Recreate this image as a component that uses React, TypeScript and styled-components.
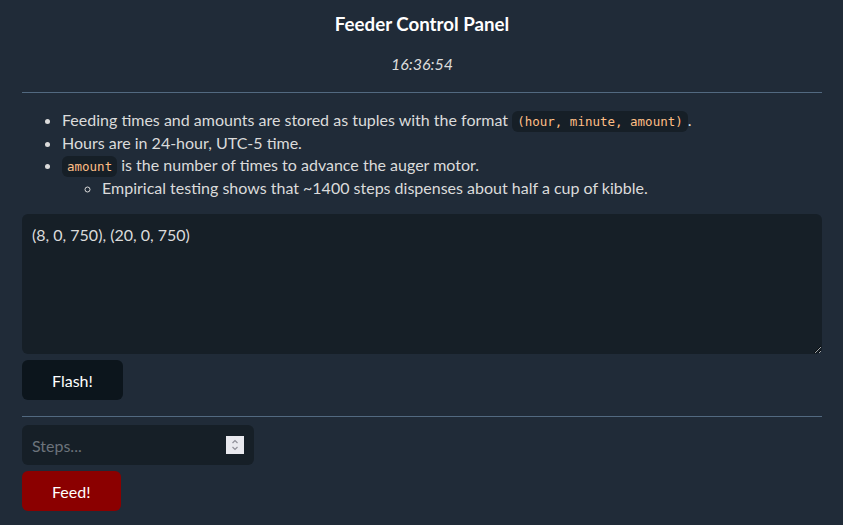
import React from "react";
import styled, { createGlobalStyle } from "styled-components";

const Global = createGlobalStyle`
  html { background: #202b38; }
  body {
    margin: 0;
    background: #202b38;
    color: #dbdbdb;
    font-family: "Lato", "Noto Sans", sans-serif;
    font-size: 16px;
    line-height: 1.4;
  }
`;

const Page = styled.main`
  max-width: 800px;
  margin: 0 auto;
  padding: 11px 21px 14px 22px;
  display: flex;
  flex-direction: column;
  align-items: stretch;
`;

const Title = styled.h3`
  margin: 0;
  text-align: center;
  color: #ffffff;
  font-size: 18.72px;
  font-weight: 700;
  line-height: 26px;
`;

const Clock = styled.p`
  margin: 16px 0 0;
  text-align: center;
  font-style: italic;
  line-height: 22.4px;
`;

const Rule = styled.hr<{ $top: number; $bottom: number }>`
  width: 100%;
  border: none;
  border-top: 1px solid #526980;
  margin: ${(p) => p.$top}px 0 ${(p) => p.$bottom}px;
`;

const List = styled.ul<{ $nested?: boolean }>`
  margin: 0;
  padding-left: 40px;
  list-style: ${(p) => (p.$nested ? "circle" : "disc")};
  line-height: 22.4px;
`;

const Code = styled.code`
  font-family: "DejaVu Sans Mono", monospace;
  font-size: 12.5px;
  line-height: 1;
  color: #ffbe85;
  background: #161f27;
  padding: 3px 5px;
  border-radius: 6px;
`;

const Area = styled.textarea`
  box-sizing: border-box;
  display: block;
  width: 100%;
  height: 140px;
  margin: 15px 0 6px;
  padding: 10px;
  border: none;
  border-radius: 6px;
  background: #161f27;
  color: #dbdbdb;
  font-family: inherit;
  font-size: 16px;
  line-height: 1.4;
  resize: vertical;
  outline: none;
`;

const Button = styled.button<{ $danger?: boolean }>`
  align-self: flex-start;
  box-sizing: border-box;
  height: 40px;
  padding: 0 30px;
  border: none;
  border-radius: 6px;
  background: ${(p) => (p.$danger ? "#8b0000" : "#0c151c")};
  color: #ffffff;
  font-family: inherit;
  font-size: 16px;
`;

const StepsField = styled.div`
  align-self: flex-start;
  position: relative;
  width: 232px;
  height: 40px;
  margin: 0 0 6px;
`;

const NumberInput = styled.input`
  box-sizing: border-box;
  width: 100%;
  height: 100%;
  padding: 10px;
  border: none;
  border-radius: 6px;
  background: #161f27;
  color: #dbdbdb;
  font-family: inherit;
  font-size: 16px;
  outline: none;
  -moz-appearance: textfield;
  &::placeholder { color: #6c737b; }
  &::-webkit-inner-spin-button,
  &::-webkit-outer-spin-button { -webkit-appearance: none; margin: 0; }
`;

const Spinner = styled.svg`
  position: absolute;
  top: 11px;
  right: 10px;
  width: 18px;
  height: 18px;
  pointer-events: none;
`;

export default function App() {
  return (
    <>
      <Global />
      <Page>
        <Title>Feeder Control Panel</Title>
        <Clock>16:36:54</Clock>
        <Rule $top={17} $bottom={16} />
        <List>
          <li>
            Feeding times and amounts are stored as tuples with the format{" "}
            <Code>(hour, minute, amount)</Code>.
          </li>
          <li>Hours are in 24-hour, UTC-5 time.</li>
          <li>
            <Code>amount</Code> is the number of times to advance the auger motor.
            <List $nested>
              <li>Empirical testing shows that ~1400 steps dispenses about half a cup of kibble.</li>
            </List>
          </li>
        </List>
        <Area defaultValue="(8, 0, 750), (20, 0, 750)" />
        <Button>Flash!</Button>
        <Rule $top={16} $bottom={8} />
        <StepsField>
          <NumberInput type="number" placeholder="Steps..." />
          <Spinner viewBox="0 0 18 18" aria-hidden="true">
            <rect width="18" height="18" fill="#e9e9ee" />
            <path d="M6.5 7 L9 4.5 L11.5 7" fill="none" stroke="#8f8f98" strokeWidth="1.2" />
            <path d="M6.5 11 L9 13.5 L11.5 11" fill="none" stroke="#8f8f98" strokeWidth="1.2" />
          </Spinner>
        </StepsField>
        <Button $danger>Feed!</Button>
      </Page>
    </>
  );
}
